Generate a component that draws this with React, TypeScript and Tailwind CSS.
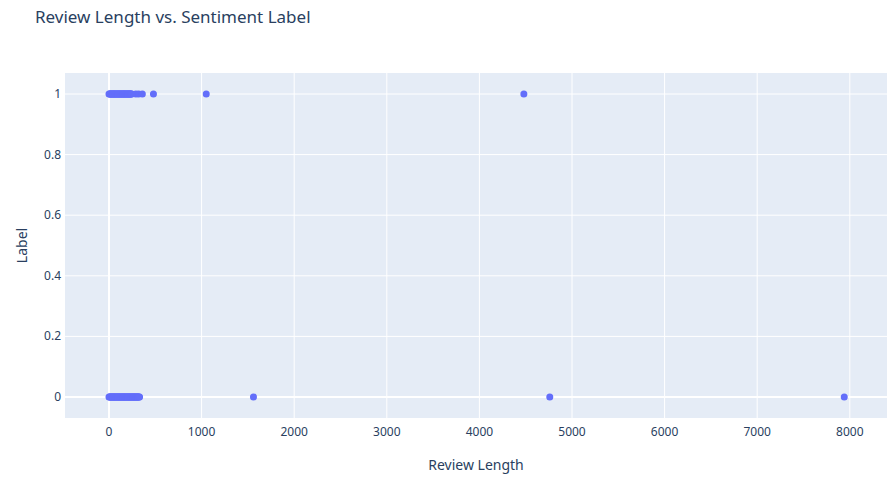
const L = 65, T = 73, R = 887, B = 418;
const x0 = 109, kx = 92.6 / 1000;
const y1 = 94, y0 = 397;
const px = (v: number) => x0 + v * kx;
const py = (v: number) => y0 - v * (y0 - y1);

const dense = (from: number, to: number, step: number) => {
  const a: number[] = [];
  for (let v = from; v <= to; v += step) a.push(v);
  return a;
};
const ones = [...dense(0, 250, 6), 290, 320, 360, 480, 1050, 4480];
const zeros = [...dense(0, 330, 6), 1560, 4760, 7940];

export default function App() {
  const xt = [0, 1000, 2000, 3000, 4000, 5000, 6000, 7000, 8000];
  const yt = [0, 0.2, 0.4, 0.6, 0.8, 1];
  return (
    <div className="w-[896px] h-[480px] bg-white font-['Open_Sans',sans-serif] text-[#2a3f5f]">
      <svg width="896" height="480">
        <text x="35" y="23" fontSize="17" fill="#2a3f5f">Review Length vs. Sentiment Label</text>
        <rect x={L} y={T} width={R - L} height={B - T} fill="#e5ecf6" />
        {xt.map((v) => (
          <line key={v} x1={px(v)} x2={px(v)} y1={T} y2={B} stroke="#fff" strokeWidth={v === 0 ? 2 : 1} />
        ))}
        {yt.map((v) => (
          <line key={v} x1={L} x2={R} y1={py(v)} y2={py(v)} stroke="#fff" strokeWidth={v === 0 ? 2 : 1} />
        ))}
        {xt.map((v) => (
          <text key={v} x={px(v)} y={B + 18} fontSize="12" fill="#2a3f5f" textAnchor="middle">{v}</text>
        ))}
        {yt.map((v) => (
          <text key={v} x={L - 4} y={py(v) + 4} fontSize="12" fill="#2a3f5f" textAnchor="end">{v}</text>
        ))}
        {ones.map((v, i) => (
          <circle key={'a' + i} cx={px(v)} cy={py(1)} r="3.5" fill="#636efa" />
        ))}
        {zeros.map((v, i) => (
          <circle key={'b' + i} cx={px(v)} cy={py(0)} r="3.5" fill="#636efa" />
        ))}
        <text x={(L + R) / 2} y="470" fontSize="14" fill="#2a3f5f" textAnchor="middle">Review Length</text>
        <text x="27" y={(T + B) / 2} fontSize="14" fill="#2a3f5f" textAnchor="middle" transform={`rotate(-90 27 ${(T + B) / 2})`}>Label</text>
      </svg>
    </div>
  );
}
